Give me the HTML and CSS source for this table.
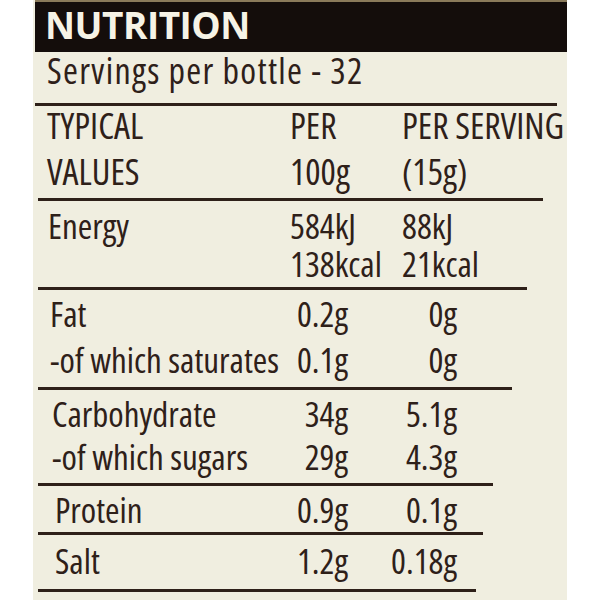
FILE: index.html
```html
<!DOCTYPE html>
<html lang="en">
<head>
    <meta charset="UTF-8">
    <meta name="viewport" content="width=device-width, initial-scale=1.0">
    <title>Nutrition</title>
    <link rel="stylesheet" href="styles.css">
</head>
<body>
    <div class="label">
        <div class="band">NUTRITION</div>

        <div class="servings">Servings per bottle - 32</div>

        <div class="section wide head">
            <div>TYPICAL</div><div>PER</div><div>PER SERVING</div>
            <div>VALUES</div><div>100g</div><div>(15g)</div>
        </div>

        <div class="section wide energy">
            <div>Energy</div><div>584kJ</div><div>88kJ</div>
            <div></div><div>138kcal</div><div>21kcal</div>
        </div>

        <div class="section fat">
            <div>Fat</div><div class="num">0.2g</div><div class="num">0g</div>
            <div>-of which saturates</div><div class="num">0.1g</div><div class="num">0g</div>
        </div>

        <div class="section carb">
            <div>Carbohydrate</div><div class="num">34g</div><div class="num">5.1g</div>
            <div>-of which sugars</div><div class="num">29g</div><div class="num">4.3g</div>
        </div>

        <div class="section protein">
            <div>Protein</div><div class="num">0.9g</div><div class="num">0.1g</div>
        </div>

        <div class="section salt">
            <div>Salt</div><div class="num">1.2g</div><div class="num">0.18g</div>
        </div>
    </div>
</body>
</html>
```

FILE: styles.css
```css
body {
    margin: 0;
    background: #ffffff;
}

.label {
    margin-left: 33px;
    width: 534px;
    height: 600px;
    background: #f0eee0;
    color: #2e2019;
    font-family: "Open Sans", "DejaVu Sans", sans-serif;
    font-stretch: 75%;
    font-weight: 500;
}

.band {
    margin-left: 2px;
    height: 52px;
    padding-left: 10px;
    background: #140d0b;
    border-top: 2px solid #8a7a5a;
    box-sizing: border-box;
    color: #f6f3e6;
    font-stretch: 100%;
    font-weight: bold;
    font-size: 37px;
    letter-spacing: -0.5px;
    line-height: 46px;
}

.servings {
    font-size: 36px;
    letter-spacing: 1.3px;
    line-height: 37px;
    padding: 0 0 14px 12px;
    width: 510px;
    margin-left: 2px;
    border-bottom: 3px solid #2e2019;
}

.section {
    --inset: 10px;
    display: grid;
    grid-template-columns: 252px 58px 109px;
    font-size: 35px;
    white-space: nowrap;
    margin-left: 5px;
    border-bottom: 3px solid #2e2019;
}

.section.wide {
    grid-template-columns: 252px 112px auto;
}

.section > div:nth-child(3n+1) {
    padding-left: var(--inset);
}

.section .num {
    text-align: right;
}

.head {
    --inset: 9px;
    margin-top: -3px;
    font-size: 36px;
    line-height: 46px;
    padding-bottom: 3px;
    width: 505px;
}

.energy {
    line-height: 38px;
    padding: 6px 0 4px;
    width: 489px;
}

.fat {
    --inset: 12px;
    line-height: 46px;
    padding: 1px 0 4px;
    width: 474px;
}

.carb {
    --inset: 14px;
    line-height: 43px;
    padding: 2px 0 5px;
    width: 455px;
}

.protein {
    --inset: 17px;
    line-height: 40px;
    padding: 4px 0 2px;
    width: 445px;
}

.salt {
    --inset: 17px;
    line-height: 44px;
    padding: 4px 0 6px;
    width: 438px;
}
```
